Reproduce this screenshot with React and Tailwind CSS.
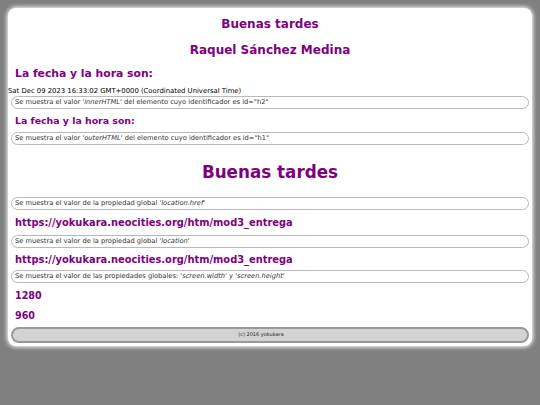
import React from 'react'

const font = { fontFamily: '"DejaVu Sans", Verdana, sans-serif' }

const Pill = ({ children }) => (
  <div className="mx-[3px] border border-[#b8b8b8] rounded-full bg-white px-[3px] h-[13px] flex items-center text-[6.7px] text-[#333]">
    <span>{children}</span>
  </div>
)

const App = () => {
  return (
    <div className="w-[540px] h-[405px] bg-[#808080] pt-[8px] px-[8px]" style={font}>
      <div className="bg-white rounded-[8px] shadow-[0_0_4px_1px_#ffffff] pb-[3px] pt-[8px]">
        <h3 className="text-center text-[12px] font-bold text-[#800080] leading-[16px]">Buenas tardes</h3>
        <h3 className="text-center text-[12px] font-bold text-[#800080] leading-[16px] mt-[10px]">Raquel Sánchez Medina</h3>
        <h2 className="text-[10.8px] font-bold text-[#800080] leading-[16px] mt-[8px] pl-[7px]">La fecha y la hora son:</h2>
        <div className="text-[6.85px] text-black leading-[9px] mt-[5px]">Sat Dec 09 2023 16:33:02 GMT+0000 (Coordinated Universal Time)</div>
        <Pill>Se muestra el valor <i>'innerHTML'</i> del elemento cuyo identificador es id="h2"</Pill>
        <h2 className="text-[9.4px] font-bold text-[#800080] leading-[14px] mt-[5px] pl-[7px]">La fecha y la hora son:</h2>
        <div className="mt-[4px]">
          <Pill>Se muestra el valor <i>'outerHTML'</i> del elemento cuyo identificador es id="h1"</Pill>
        </div>
        <h1 className="text-center text-[16.8px] font-bold text-[#800080] leading-[22px] mt-[16px]">Buenas tardes</h1>
        <div className="mt-[14px]">
          <Pill>Se muestra el valor de la propiedad global <i>'location.href'</i></Pill>
        </div>
        <div className="text-[9.9px] font-bold text-[#800080] leading-[14px] mt-[6px] pl-[7px]">https://yokukara.neocities.org/htm/mod3_entrega</div>
        <div className="mt-[5px]">
          <Pill>Se muestra el valor de la propiedad global <i>'location'</i></Pill>
        </div>
        <div className="text-[9.9px] font-bold text-[#800080] leading-[14px] mt-[5px] pl-[7px]">https://yokukara.neocities.org/htm/mod3_entrega</div>
        <div className="mt-[3px]">
          <Pill>Se muestra el valor de las propiedades globales: <i>'screen.width'</i> y <i>'screen.height'</i></Pill>
        </div>
        <div className="text-[9.6px] font-bold text-[#800080] leading-[12px] mt-[7px] pl-[7px]">1280</div>
        <div className="text-[9.6px] font-bold text-[#800080] leading-[12px] mt-[8px] pl-[7px]">960</div>
        <div className="mx-[3px] mt-[5px] h-[16px] rounded-full bg-[#d3d3d3] border-2 border-[#999] flex items-center justify-center pr-[18px] text-[5px] text-[#222]">
          (c) 2016 yokukara
        </div>
      </div>
    </div>
  )
}

export default App
